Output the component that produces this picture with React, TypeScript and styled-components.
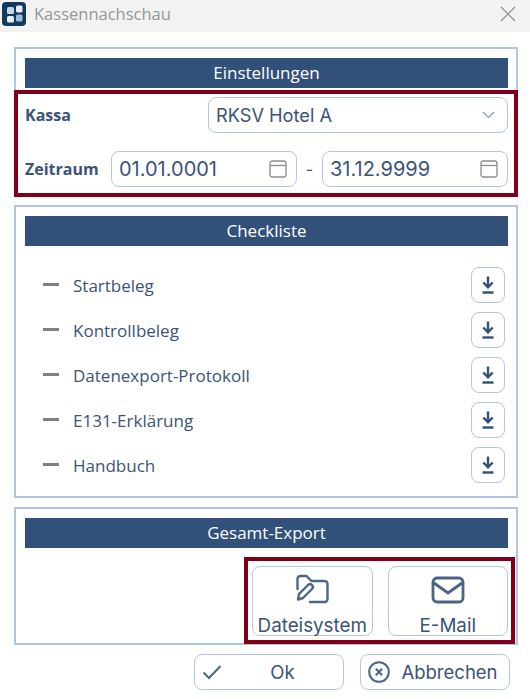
import React from 'react'
import styled, { createGlobalStyle } from 'styled-components'

const GlobalStyle = createGlobalStyle`
  html, body { margin: 0; padding: 0; background: #fff; }
  * { box-sizing: border-box; }
`

const NAVY = '#31507a'
const TEXT = '#3b5378'
const LINE = '#b0c8e6'
const MAROON = '#7f0018'

const Dialog = styled.div`
  width: 530px;
  height: 699px;
  background: #fff;
  overflow: hidden;
  font-family: 'Open Sans', 'Liberation Sans', sans-serif;
  color: ${TEXT};
`

const TitleBar = styled.div`
  height: 32px;
  background: #f2f2f2;
  display: flex;
  align-items: center;
  padding: 0 14px 5px 2px;
  margin-bottom: 15px;
`

const TitleText = styled.span`
  flex: 1;
  margin-left: 8px;
  font-size: 16.5px;
  color: #979797;
`

const Panel = styled.section<{ $height: number; $gap: number }>`
  width: 504px;
  height: ${p => p.$height}px;
  margin: 0 0 ${p => p.$gap}px 14px;
  border: 2px solid ${LINE};
  padding: 9px 8px 0 9px;
`

const Banner = styled.div`
  height: 30px;
  background: ${NAVY};
  color: #fff;
  font-size: 17px;
  line-height: 30px;
  text-align: center;
`

const Highlight = styled.div`
  border: 4px solid ${MAROON};
`

const SettingsFrame = styled(Highlight)`
  margin: 2px -10px 0 -11px;
  padding: 3px 6px 6px 7px;
  display: flex;
  flex-direction: column;
  gap: 18px;
`

const FieldRow = styled.div`
  display: flex;
  align-items: center;
  height: 36px;
`

const Label = styled.label<{ $width: number }>`
  width: ${p => p.$width}px;
  font-size: 16px;
  font-weight: 700;
  color: ${TEXT};
`

const Field = styled.div<{ $width: number; $size: number }>`
  width: ${p => p.$width}px;
  height: 36px;
  border: 1.5px solid ${LINE};
  border-radius: 8px;
  display: flex;
  align-items: center;
  justify-content: space-between;
  padding: 0 9px 0 7px;
  font-family: Inter, 'Liberation Sans', sans-serif;
  font-size: ${p => p.$size}px;
  color: ${TEXT};
`

const Dash = styled.span`
  width: 25px;
  text-align: center;
  font-family: Inter, sans-serif;
  font-size: 16px;
`

const CheckList = styled.ul`
  list-style: none;
  margin: 21px 3px 0 18px;
  padding: 0;
  display: flex;
  flex-direction: column;
  gap: 9px;
`

const CheckRow = styled.li`
  height: 36px;
  display: flex;
  align-items: center;
`

const Pending = styled.span`
  width: 16px;
  height: 3px;
  background: #808080;
  margin: -2px 14px 0 0;
`

const CheckName = styled.span`
  flex: 1;
  font-size: 17px;
  color: ${TEXT};
`

const IconButton = styled.button`
  width: 34px;
  height: 36px;
  padding: 0;
  background: #fff;
  border: 1.5px solid ${LINE};
  border-radius: 8px;
  display: flex;
  align-items: center;
  justify-content: center;
`

const ExportFrame = styled(Highlight)`
  width: 271px;
  height: 87px;
  margin: 9px -7px 0 auto;
  padding: 5px 3px 0 4px;
  display: flex;
  gap: 15px;
`

const ExportButton = styled.button`
  flex: 1;
  height: 70px;
  padding: 0;
  background: #fff;
  border: 1.5px solid ${LINE};
  border-radius: 8px;
  display: flex;
  flex-direction: column;
  align-items: center;
  font-family: Inter, 'Liberation Sans', sans-serif;
  font-size: 18.8px;
  line-height: 17px;
  color: ${TEXT};
`

const ExportIcon = styled.span`
  height: 50px;
  padding-top: 7px;
  display: flex;
`

const Footer = styled.div`
  display: flex;
  justify-content: flex-end;
  gap: 16px;
  padding-right: 20px;
  margin-top: -1px;
`

const ActionButton = styled.button`
  width: 150px;
  height: 36px;
  background: #fff;
  border: 1.5px solid ${LINE};
  border-radius: 8px;
  display: flex;
  align-items: center;
  padding: 0 0 0 7px;
  font-family: Inter, 'Liberation Sans', sans-serif;
  font-size: 18.5px;
  color: ${TEXT};
`

const ActionText = styled.span`
  flex: 1;
  text-align: center;
`

function AppIcon() {
  return (
    <svg width="24" height="24" viewBox="0 0 24 24">
      <rect width="24" height="24" rx="4" fill="#11395c" />
      <rect x="5" y="5" width="7" height="7" rx="1.5" fill="#c4d6e6" />
      <rect x="14" y="3.5" width="6.5" height="7" rx="1.5" fill="#e6eef5" />
      <rect x="5" y="14" width="7" height="6.5" rx="1.5" fill="#e6eef5" />
      <rect x="14" y="12.5" width="6.5" height="7" rx="1.5" fill="#9fbdd8" />
    </svg>
  )
}

function CloseIcon() {
  return (
    <svg width="16" height="16" viewBox="0 0 16 16" fill="none" stroke="#8a8a8a" strokeWidth="1.2">
      <path d="M1 1l14 14M15 1L1 15" />
    </svg>
  )
}

function Chevron() {
  return (
    <svg width="13" height="8" viewBox="0 0 13 8" fill="none" stroke="#8b9bb0" strokeWidth="1.2" style={{ marginRight: 3 }}>
      <path d="M1 1l5.5 5.5L12 1" />
    </svg>
  )
}

function Calendar() {
  return (
    <svg width="18" height="18" viewBox="0 0 18 18" fill="none" stroke="#8d8d8d" strokeWidth="1.3">
      <rect x="1" y="1" width="16" height="16" rx="2.5" />
      <path d="M1 5.5h16" />
    </svg>
  )
}

function DownloadIcon() {
  return (
    <svg width="12" height="18" viewBox="0 0 12 18" fill="none" stroke={NAVY}>
      <path d="M6 0.5v10.5" strokeWidth="2.4" />
      <path d="M1.3 6.5L6 11.2l4.7-4.7" strokeWidth="2.4" />
      <path d="M0.5 16.5h11" strokeWidth="2.4" />
    </svg>
  )
}

function FolderPen() {
  return (
    <svg width="34" height="30" viewBox="0 0 34 30" fill="none" stroke="#4c6486" strokeWidth="2.4" strokeLinecap="round" strokeLinejoin="round">
      <path d="M2.5 15V5a3 3 0 0 1 3-3h6l5 5h13a3 3 0 0 1 3 3v15a3 3 0 0 1-3 3H15" />
      <path d="M4 20l9-9a2.8 2.8 0 0 1 4 4l-9 9-5 1.5z" />
    </svg>
  )
}

function MailIcon() {
  return (
    <svg width="34" height="28" viewBox="0 0 34 28" fill="none" stroke="#4c6486" strokeWidth="2.8" strokeLinejoin="round" strokeLinecap="round" style={{ marginTop: 2 }}>
      <rect x="2" y="2" width="30" height="24" rx="4" />
      <path d="M3 7l14 10L31 7" />
    </svg>
  )
}

function CheckIcon() {
  return (
    <svg width="20" height="16" viewBox="0 0 20 16" fill="none" stroke="#4c6486" strokeWidth="2">
      <path d="M1.5 8.5l5.5 5.5L18.5 2" />
    </svg>
  )
}

function CancelIcon() {
  return (
    <svg width="22" height="22" viewBox="0 0 22 22" fill="none" stroke="#4c6486">
      <circle cx="11" cy="11" r="9.8" strokeWidth="2" />
      <path d="M7.8 7.8l6.4 6.4M14.2 7.8l-6.4 6.4" strokeWidth="2" />
    </svg>
  )
}

const checks = ['Startbeleg', 'Kontrollbeleg', 'Datenexport-Protokoll', 'E131-Erklärung', 'Handbuch']

export default function App() {
  return (
    <Dialog>
      <GlobalStyle />
      <TitleBar>
        <AppIcon />
        <TitleText>Kassennachschau</TitleText>
        <CloseIcon />
      </TitleBar>

      <Panel $height={150} $gap={8}>
        <Banner>Einstellungen</Banner>
        <SettingsFrame>
          <FieldRow>
            <Label $width={183}>Kassa</Label>
            <Field $width={300} $size={18.2}>
              RKSV Hotel A
              <Chevron />
            </Field>
          </FieldRow>
          <FieldRow>
            <Label $width={86}>Zeitraum</Label>
            <Field $width={186} $size={20}>
              01.01.0001
              <Calendar />
            </Field>
            <Dash>-</Dash>
            <Field $width={186} $size={20}>
              31.12.9999
              <Calendar />
            </Field>
          </FieldRow>
        </SettingsFrame>
      </Panel>

      <Panel $height={293} $gap={9}>
        <Banner>Checkliste</Banner>
        <CheckList>
          {checks.map(name => (
            <CheckRow key={name}>
              <Pending />
              <CheckName>{name}</CheckName>
              <IconButton aria-label={`${name} herunterladen`}>
                <DownloadIcon />
              </IconButton>
            </CheckRow>
          ))}
        </CheckList>
      </Panel>

      <Panel $height={138} $gap={10}>
        <Banner>Gesamt-Export</Banner>
        <ExportFrame>
          <ExportButton>
            <ExportIcon><FolderPen /></ExportIcon>
            Dateisystem
          </ExportButton>
          <ExportButton>
            <ExportIcon><MailIcon /></ExportIcon>
            E-Mail
          </ExportButton>
        </ExportFrame>
      </Panel>

      <Footer>
        <ActionButton>
          <CheckIcon />
          <ActionText>Ok</ActionText>
        </ActionButton>
        <ActionButton>
          <CancelIcon />
          <ActionText>Abbrechen</ActionText>
        </ActionButton>
      </Footer>
    </Dialog>
  )
}
